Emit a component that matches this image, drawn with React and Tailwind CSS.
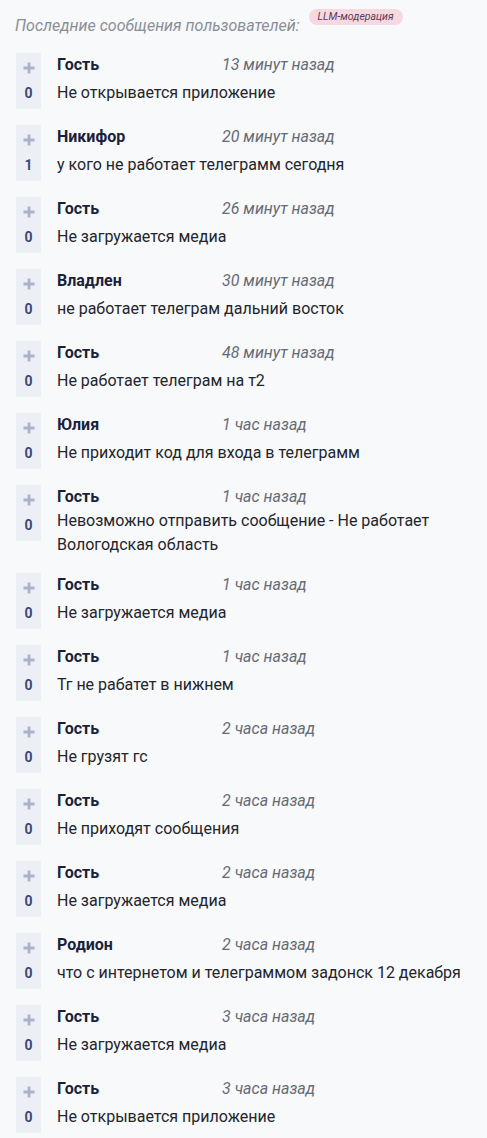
const messages = [
  { name: 'Гость', time: '13 минут назад', text: 'Не открывается приложение', votes: 0 },
  { name: 'Никифор', time: '20 минут назад', text: 'у кого не работает телеграмм сегодня', votes: 1 },
  { name: 'Гость', time: '26 минут назад', text: 'Не загружается медиа', votes: 0 },
  { name: 'Владлен', time: '30 минут назад', text: 'не работает телеграм дальний восток', votes: 0 },
  { name: 'Гость', time: '48 минут назад', text: 'Не работает телеграм на т2', votes: 0 },
  { name: 'Юлия', time: '1 час назад', text: 'Не приходит код для входа в телеграмм', votes: 0 },
  { name: 'Гость', time: '1 час назад', text: 'Невозможно отправить сообщение - Не работает Вологодская область', votes: 0 },
  { name: 'Гость', time: '1 час назад', text: 'Не загружается медиа', votes: 0 },
  { name: 'Гость', time: '1 час назад', text: 'Тг не рабатет в нижнем', votes: 0 },
  { name: 'Гость', time: '2 часа назад', text: 'Не грузят гс', votes: 0 },
  { name: 'Гость', time: '2 часа назад', text: 'Не приходят сообщения', votes: 0 },
  { name: 'Гость', time: '2 часа назад', text: 'Не загружается медиа', votes: 0 },
  { name: 'Родион', time: '2 часа назад', text: 'что с интернетом и телеграммом задонск 12 декабря', votes: 0 },
  { name: 'Гость', time: '3 часа назад', text: 'Не загружается медиа', votes: 0 },
  { name: 'Гость', time: '3 часа назад', text: 'Не открывается приложение', votes: 0 },
]

function PlusIcon() {
  return (
    <svg width="12" height="12" viewBox="0 0 12 12" className="block">
      <path d="M6 0.5v11M0.5 6h11" stroke="#aab3cb" strokeWidth="2.8" />
    </svg>
  )
}

function Message({ m }) {
  return (
    <div className="grid grid-cols-[25px_1fr] gap-x-4">
      {/* vote box */}
      <div className="row-span-2 h-14 bg-[#eceff6] flex flex-col items-center justify-between pt-[9px] pb-[8px]">
        <PlusIcon />
        <span className="text-[14px] font-bold leading-4 text-[#3d4a78]">{m.votes}</span>
      </div>
      <div className="flex leading-6">
        <span className="w-[165px] shrink-0 font-bold text-[#1b1f3b]">{m.name}</span>
        <span className="italic text-[#666b75]">{m.time}</span>
      </div>
      <div className="leading-6 text-[#23252b] pr-2">{m.text}</div>
    </div>
  )
}

export default function App() {
  return (
    <div className="min-h-screen bg-[#f8f9fb] font-['Roboto',sans-serif] text-base pl-4 pt-[9px]">
      <div className="flex items-start -ml-[1px]">
        <span className="italic text-[#8b8e96] mt-[5px] leading-6">Последние сообщения пользователей:</span>
        <span className="ml-[9px] rounded-full bg-[#f6d9e0] px-[9px] text-[10.5px] leading-4 italic text-[#5b3b58]">LLM-модерация</span>
      </div>
      <div className="flex flex-col gap-4 mt-[15px]">
        {messages.map((m, i) => (
          <Message key={i} m={m} />
        ))}
      </div>
    </div>
  )
}
